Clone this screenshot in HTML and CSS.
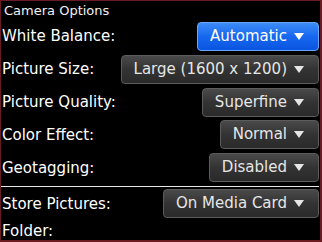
FILE: index.html
```html
<!DOCTYPE html>
<html>
<head>
<meta charset="utf-8">
<link rel="stylesheet" href="styles.css">
</head>
<body>
<div class="screen">
  <div class="title">Camera Options</div>
  <div class="row"><span class="label">White Balance:</span><span class="choice active">Automatic<svg class="arrow" viewBox="0 0 10 7"><polygon points="0,0 10,0 5,7"/></svg></span></div>
  <div class="row"><span class="label">Picture Size:</span><span class="choice">Large (1600 x 1200)<svg class="arrow" viewBox="0 0 10 7"><polygon points="0,0 10,0 5,7"/></svg></span></div>
  <div class="row"><span class="label">Picture Quality:</span><span class="choice">Superfine<svg class="arrow" viewBox="0 0 10 7"><polygon points="0,0 10,0 5,7"/></svg></span></div>
  <div class="row"><span class="label">Color Effect:</span><span class="choice">Normal<svg class="arrow" viewBox="0 0 10 7"><polygon points="0,0 10,0 5,7"/></svg></span></div>
  <div class="row"><span class="label">Geotagging:</span><span class="choice">Disabled<svg class="arrow" viewBox="0 0 10 7"><polygon points="0,0 10,0 5,7"/></svg></span></div>
  <div class="sep"></div>
  <div class="row"><span class="label">Store Pictures:</span><span class="choice">On Media Card<svg class="arrow" viewBox="0 0 10 7"><polygon points="0,0 10,0 5,7"/></svg></span></div>
  <div class="row last"><span class="label">Folder:</span></div>
</div>
</body>
</html>
```
FILE: styles.css
```css
html, body {
  margin: 0;
  padding: 0;
  background: #000;
}
.screen {
  width: 322px;
  height: 242px;
  box-sizing: border-box;
  border-style: solid;
  border-color: #6a1b22;
  border-width: 1px 2px 2px 1px;
  background: #000;
  color: #fff;
  font-family: "DejaVu Sans", "Liberation Sans", sans-serif;
  overflow: hidden;
  display: flex;
  flex-direction: column;
}
.title {
  height: 19px;
  line-height: 19px;
  font-size: 13px;
  padding-left: 3px;
  color: #f2f2f2;
}
.row {
  height: 33px;
  display: flex;
  align-items: center;
  justify-content: space-between;
  padding-left: 1px;
  padding-right: 1px;
  font-size: 15px;
}
.row.last {
  height: 19px;
  padding-top: 1px;
}
.label {
  color: #fff;
  white-space: nowrap;
}
.choice {
  height: 27px;
  box-sizing: border-box;
  height: 29px;
  display: flex;
  align-items: center;
  padding: 0 14px 1px 12px;
  border-radius: 4px;
  border: 1px solid #5c5c5c;
  background: linear-gradient(#4a4a4a, #333 50%, #2a2a2a);
  color: #e6e6e6;
  white-space: nowrap;
}
.choice.active {
  border-color: #6aa6ff;
  background: linear-gradient(#3d8cf7, #1767ee 50%, #0a55e0);
  color: #fff;
}
.arrow {
  width: 10px;
  height: 7px;
  margin-left: 7px;
  margin-top: 1px;
  fill: currentColor;
}
.sep {
  height: 1px;
  margin-top: 2px;
  background: #e8e8e8;
  margin-right: 1px;
}
```
